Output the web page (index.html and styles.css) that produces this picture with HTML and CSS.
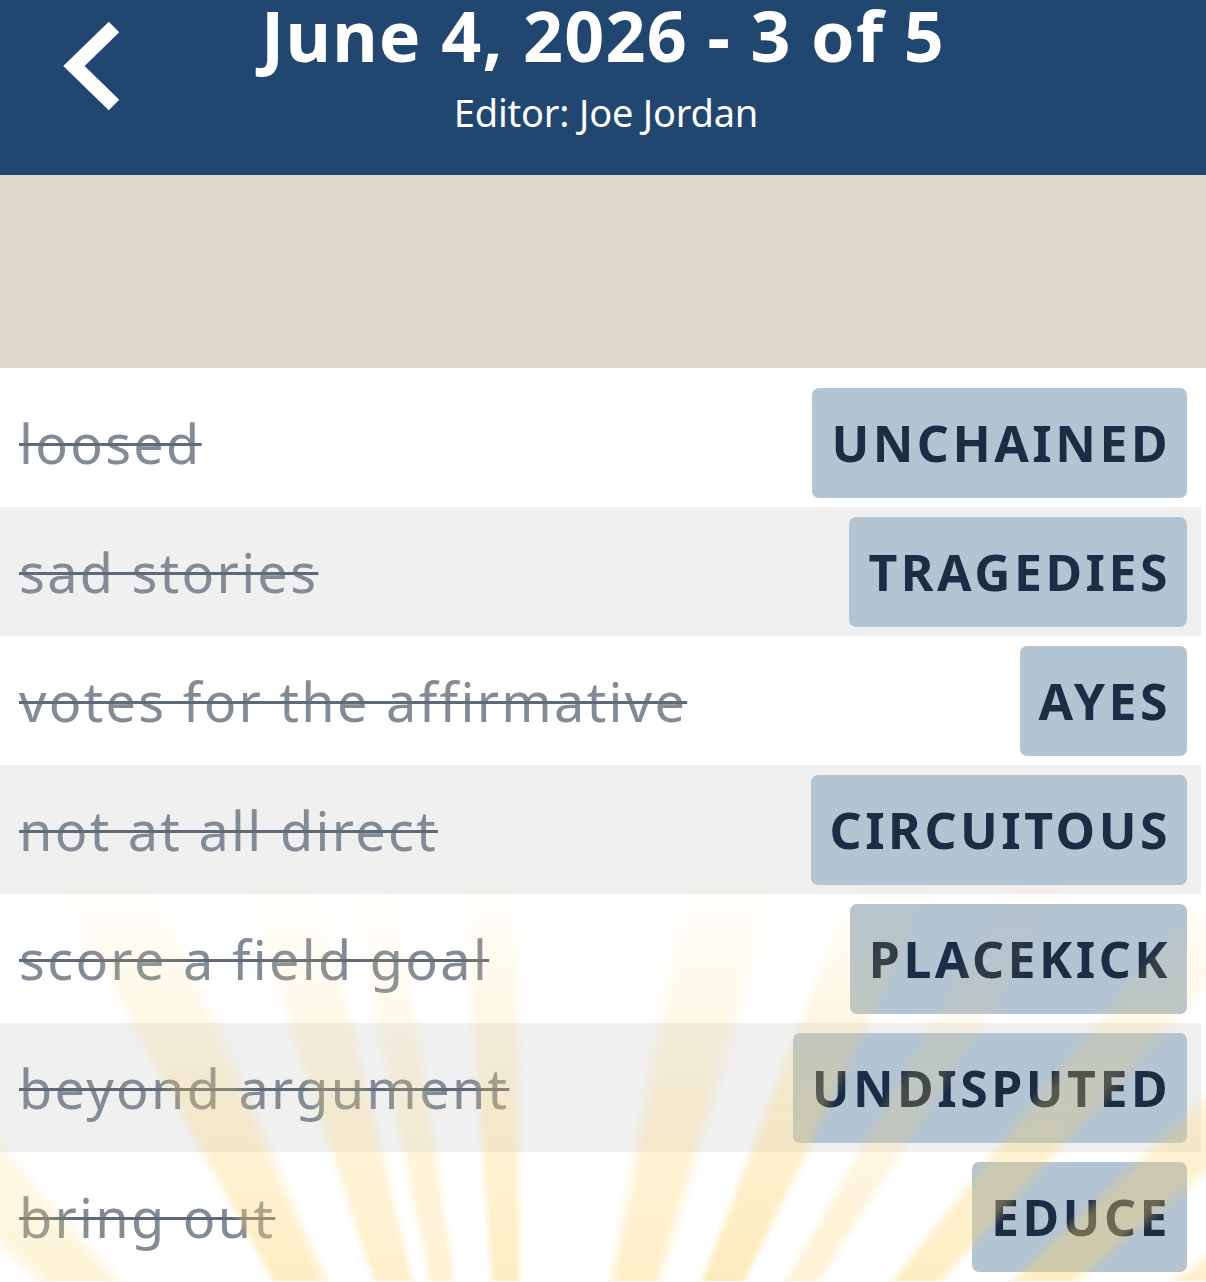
FILE: index.html
```html
<!DOCTYPE html>
<html lang="en">
<head>
    <meta charset="UTF-8">
    <meta name="viewport" content="width=device-width, initial-scale=1.0">
    <title>June 4, 2026 - 3 of 5</title>
    <link rel="stylesheet" href="styles.css">
</head>
<body>
    <div class="header">
        <a class="back" href="#">
            <svg width="130" height="130" viewBox="0 0 130 130">
                <polyline points="114,27 74,66 114,105" fill="none" stroke="#fff" stroke-width="15" stroke-linejoin="miter"/>
            </svg>
        </a>
        <div class="header-text">
            <h1>June 4, 2026 - 3 of 5</h1>
            <div class="editor">Editor: Joe Jordan</div>
        </div>
    </div>

    <div class="banner"></div>

    <div class="clues">
        <div class="clue">
            <span class="hint">loosed</span>
            <span class="answer">UNCHAINED</span>
        </div>
        <div class="clue">
            <span class="hint">sad stories</span>
            <span class="answer">TRAGEDIES</span>
        </div>
        <div class="clue">
            <span class="hint">votes for the affirmative</span>
            <span class="answer">AYES</span>
        </div>
        <div class="clue">
            <span class="hint">not at all direct</span>
            <span class="answer">CIRCUITOUS</span>
        </div>
        <div class="clue">
            <span class="hint">score a field goal</span>
            <span class="answer">PLACEKICK</span>
        </div>
        <div class="clue">
            <span class="hint">beyond argument</span>
            <span class="answer">UNDISPUTED</span>
        </div>
        <div class="clue">
            <span class="hint">bring out</span>
            <span class="answer">EDUCE</span>
        </div>
        <div class="rays"></div>
    </div>
</body>
</html>
```

FILE: styles.css
```css
body {
    margin: 0;
    padding: 0;
    font-family: 'Noto Sans', 'Open Sans', sans-serif;
    background: #fff;
    overflow: hidden;
}

.header {
    height: 175px;
    background: #21466f;
    color: #fff;
    display: flex;
    position: relative;
}

.back {
    position: absolute;
    left: 0;
    top: 0;
    display: block;
    line-height: 0;
}

.header-text {
    flex: 1;
    text-align: center;
}

.header h1 {
    margin: 0;
    font-size: 70px;
    line-height: 70px;
    font-weight: 700;
    letter-spacing: 1.2px;
}

.editor {
    margin-top: 20px;
    font-size: 38px;
    line-height: 44px;
    padding-left: 6px;
    letter-spacing: -0.2px;
}

.banner {
    height: 193px;
    background: #ded8cd;
}

.clues {
    position: relative;
    padding-top: 10px;
    padding-right: 5px;
}

.clue {
    height: 129px;
    display: flex;
    align-items: flex-start;
    justify-content: space-between;
    padding: 0 14px 0 19px;
}

.clue:nth-child(even) {
    background: #f0f0f0;
}

.hint {
    margin-top: 10px;
    height: 110px;
    display: flex;
    align-items: center;
    font-size: 54px;
    color: #838c96;
    text-decoration: line-through;
    text-decoration-color: #5e6a77;
    text-decoration-thickness: 3px;
    letter-spacing: 2.3px;
}

.answer {
    margin-top: 10px;
    height: 110px;
    display: flex;
    align-items: center;
    padding: 0 16px 0 19px;
    background: #b3c4d3;
    border-radius: 7px;
    color: #1b2d44;
    font-size: 50px;
    font-weight: 700;
    letter-spacing: 3.5px;
}

/* sunburst drawn over the lower rows */
.rays {
    position: absolute;
    left: 0;
    right: 0;
    top: 500px;
    bottom: 0;
    pointer-events: none;
    background: conic-gradient(from 0deg at 524px 876px,
        rgba(252, 212, 110, 0) 0deg 10deg,
        rgba(252, 212, 110, 0.38) 11.5deg 15.5deg,
        rgba(252, 212, 110, 0) 17deg 20.5deg,
        rgba(252, 212, 110, 0.45) 21.5deg 25deg,
        rgba(252, 212, 110, 0) 26deg 29deg,
        rgba(252, 212, 110, 0.28) 30deg 32deg,
        rgba(252, 212, 110, 0) 33deg 38deg,
        rgba(252, 212, 110, 0.4) 39deg 41.5deg,
        rgba(252, 212, 110, 0) 42.5deg 46deg,
        rgba(252, 212, 110, 0.4) 47deg 49.5deg,
        rgba(252, 212, 110, 0) 50.5deg 54deg,
        rgba(252, 212, 110, 0.35) 55deg 57deg,
        rgba(252, 212, 110, 0) 58deg 313deg,
        rgba(252, 212, 110, 0.25) 314.5deg 318deg,
        rgba(252, 212, 110, 0) 319.5deg 331deg,
        rgba(252, 212, 110, 0.4) 332deg 336deg,
        rgba(252, 212, 110, 0) 337.5deg 341.5deg,
        rgba(252, 212, 110, 0.35) 342.5deg 346deg,
        rgba(252, 212, 110, 0) 347deg 348deg,
        rgba(252, 212, 110, 0.3) 349deg 351deg,
        rgba(252, 212, 110, 0) 352deg 355.5deg,
        rgba(252, 212, 110, 0.4) 356.5deg 359deg,
        rgba(252, 212, 110, 0) 360deg);
    -webkit-mask-image: linear-gradient(to bottom, transparent 0%, rgba(0,0,0,0.3) 25%, rgba(0,0,0,0.7) 60%, #000 100%);
    mask-image: linear-gradient(to bottom, transparent 0%, rgba(0,0,0,0.3) 25%, rgba(0,0,0,0.7) 60%, #000 100%);
}
```
